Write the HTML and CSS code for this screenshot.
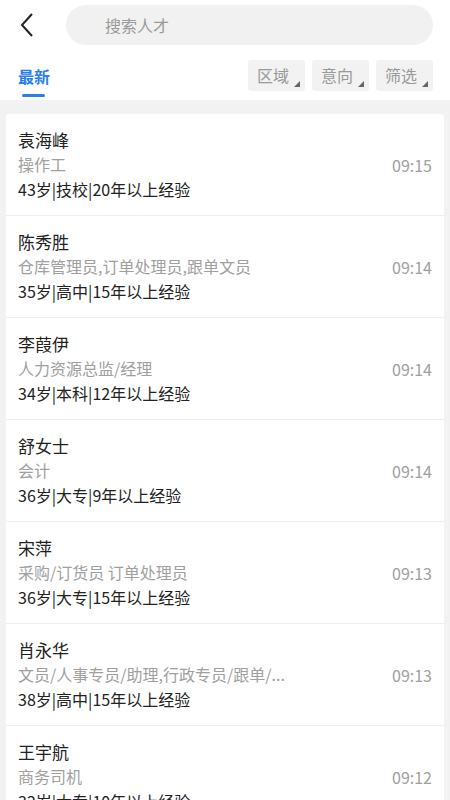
FILE: index.html
```html
<!DOCTYPE html>
<html lang="zh-CN">
<head>
  <meta charset="UTF-8" />
  <meta name="viewport" content="width=device-width, initial-scale=1.0"/>
  <title>搜索人才</title>
  <link rel="stylesheet" href="styles.css">
</head>
<body>
  <div class="topbar">
    <div class="back">
      <svg width="14" height="24" viewBox="0 0 14 24"><path d="M12 1 L2 12 L12 23" fill="none" stroke="#222" stroke-width="2"/></svg>
    </div>
    <div class="search">搜索人才</div>
  </div>

  <div class="tabs">
    <div class="tab active">最新</div>
    <div class="filters">
      <div class="filter">区域</div>
      <div class="filter">意向</div>
      <div class="filter">筛选</div>
    </div>
  </div>

  <div class="list-wrap">
    <div class="list">
      <div class="item">
        <div class="info">
          <div class="name">袁海峰</div>
          <div class="job">操作工</div>
          <div class="meta">43岁|技校|20年以上经验</div>
        </div>
        <div class="time">09:15</div>
      </div>
      <div class="item">
        <div class="info">
          <div class="name">陈秀胜</div>
          <div class="job">仓库管理员,订单处理员,跟单文员</div>
          <div class="meta">35岁|高中|15年以上经验</div>
        </div>
        <div class="time">09:14</div>
      </div>
      <div class="item">
        <div class="info">
          <div class="name">李葭伊</div>
          <div class="job">人力资源总监/经理</div>
          <div class="meta">34岁|本科|12年以上经验</div>
        </div>
        <div class="time">09:14</div>
      </div>
      <div class="item">
        <div class="info">
          <div class="name">舒女士</div>
          <div class="job">会计</div>
          <div class="meta">36岁|大专|9年以上经验</div>
        </div>
        <div class="time">09:14</div>
      </div>
      <div class="item">
        <div class="info">
          <div class="name">宋萍</div>
          <div class="job">采购/订货员 订单处理员</div>
          <div class="meta">36岁|大专|15年以上经验</div>
        </div>
        <div class="time">09:13</div>
      </div>
      <div class="item">
        <div class="info">
          <div class="name">肖永华</div>
          <div class="job">文员/人事专员/助理,行政专员/跟单/...</div>
          <div class="meta">38岁|高中|15年以上经验</div>
        </div>
        <div class="time">09:13</div>
      </div>
      <div class="item">
        <div class="info">
          <div class="name">王宇航</div>
          <div class="job">商务司机</div>
          <div class="meta">32岁|大专|10年以上经验</div>
        </div>
        <div class="time">09:12</div>
      </div>
    </div>
  </div>
</body>
</html>
```

FILE: styles.css
```css
body {
  font-family: "Noto Sans CJK SC", "Noto Sans", sans-serif;
  background: #fff;
  margin: 0;
  padding: 0;
  height: 800px;
  overflow: hidden;
  color: #333;
}

.topbar {
  display: flex;
  align-items: center;
  padding: 5px 17px 0 20px;
  height: 40px;
}

.back {
  width: 46px;
  display: flex;
  align-items: center;
}

.search {
  flex: 1;
  height: 40px;
  border-radius: 20px;
  background: #f1f1f1;
  color: #999;
  font-size: 16px;
  line-height: 40px;
  padding-left: 39px;
}

.tabs {
  display: flex;
  justify-content: space-between;
  align-items: flex-start;
  height: 55px;
  padding: 0 18px;
}

.tab {
  position: relative;
  font-size: 16px;
  font-weight: bold;
  line-height: 22px;
  margin-top: 20px;
}

.tab.active {
  color: #2a7fef;
}

.tab.active::after {
  content: "";
  position: absolute;
  left: 4px;
  top: 29px;
  width: 23px;
  height: 3px;
  border-radius: 2px;
  background: #2a7fef;
}

.filters {
  display: flex;
  gap: 7px;
  margin-top: 15px;
  margin-right: -1px;
}

.filter {
  position: relative;
  background: #f2f2f2;
  color: #999;
  font-size: 16px;
  line-height: 31px;
  height: 31px;
  width: 48px;
  padding-left: 9px;
  border-radius: 3px;
}

.filter::after {
  content: "";
  position: absolute;
  right: 5px;
  bottom: 4px;
  width: 0;
  height: 0;
  border-left: 6px solid transparent;
  border-bottom: 6px solid #666;
}

.list-wrap {
  background: #f2f2f2;
  padding: 14px 6px 0;
  min-height: 700px;
}

.list {
  background: #fff;
  border-radius: 3px;
}

.item {
  display: flex;
  align-items: center;
  justify-content: space-between;
  padding: 13px 12px 13px 12px;
  border-bottom: 1px solid #eee;
}

.name {
  font-size: 17px;
  line-height: 25px;
  color: #222;
}

.job {
  font-size: 16px;
  line-height: 24px;
  color: #a0a0a0;
}

.meta {
  font-size: 16px;
  line-height: 26px;
  color: #222;
}

.time {
  font-size: 16px;
  color: #a0a0a0;
}
```
